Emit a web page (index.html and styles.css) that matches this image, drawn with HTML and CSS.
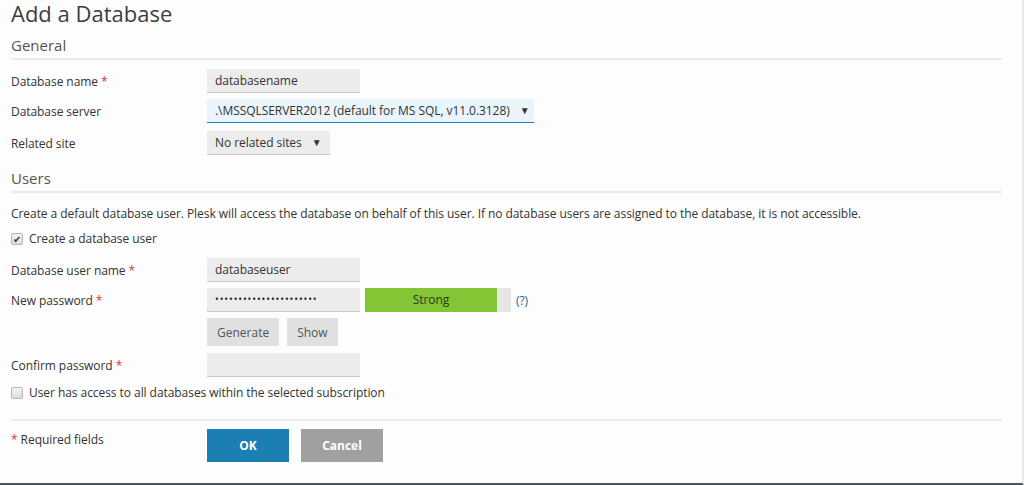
FILE: index.html
```html
<!DOCTYPE html>
<html>

<head>
  <title>Add a Database</title>
  <meta name="viewport" content="width=device-width, initial-scale=1">
  <link rel="stylesheet" href="styles.css">
</head>

<body>
  <div class="page">
    <h1>Add a Database</h1>

    <!-- General -->
    <div class="section">
      <h2>General</h2>
      <div class="row">
        <label>Database name <span class="req">*</span></label>
        <div class="field"><div class="input">databasename</div></div>
      </div>
      <div class="row">
        <label>Database server</label>
        <div class="field"><div class="select active">.\MSSQLSERVER2012 (default for MS SQL, v11.0.3128) <span class="arrow">&#9660;</span></div></div>
      </div>
      <div class="row last">
        <label>Related site</label>
        <div class="field"><div class="select">No related sites <span class="arrow">&#9660;</span></div></div>
      </div>
    </div>

    <!-- Users -->
    <div class="section users">
      <h2>Users</h2>
      <p class="hint">Create a default database user. Plesk will access the database on behalf of this user. If no database users are assigned to the database, it is not accessible.</p>
      <div class="check"><span class="box checked">&#10004;</span>Create a database user</div>
      <div class="row">
        <label>Database user name <span class="req">*</span></label>
        <div class="field"><div class="input">databaseuser</div></div>
      </div>
      <div class="row">
        <label>New password <span class="req">*</span></label>
        <div class="field">
          <div class="input dots">&bull;&bull;&bull;&bull;&bull;&bull;&bull;&bull;&bull;&bull;&bull;&bull;&bull;&bull;&bull;&bull;&bull;&bull;&bull;&bull;&bull;&bull;</div>
          <div class="strength"><div class="strength-fill">Strong</div></div>
          <span class="help">(?)</span>
        </div>
      </div>
      <div class="row buttons-row">
        <label></label>
        <div class="field">
          <button class="btn">Generate</button>
          <button class="btn">Show</button>
        </div>
      </div>
      <div class="row">
        <label>Confirm password <span class="req">*</span></label>
        <div class="field"><div class="input"></div></div>
      </div>
      <div class="check"><span class="box"></span>User has access to all databases within the selected subscription</div>
    </div>

    <!-- footer -->
    <div class="footer">
      <div class="required"><span class="req">*</span> Required fields</div>
      <div class="actions">
        <button class="btn-ok">OK</button>
        <button class="btn-cancel">Cancel</button>
      </div>
    </div>
  </div>
</body>

</html>
```

FILE: styles.css
```css
html,
body {
  margin: 0;
  height: 100%;
}

body {
  font-family: "Open Sans", Arial, sans-serif;
  font-size: 12px;
  letter-spacing: -0.06px;
  color: #333;
  background: #fdfdfd;
}

.page {
  box-sizing: border-box;
  height: 485px;
  padding: 0 20px 0 11px;
  border-right: 2px solid #e8e8e8;
  border-bottom: 2px solid #4c5661;
}

h1 {
  margin: 0;
  font-size: 22px;
  font-weight: normal;
  line-height: 26px;
  letter-spacing: 0;
  color: #3d3d3d;
}

h2 {
  margin: 0;
  font-size: 15px;
  font-weight: normal;
  line-height: 20px;
  letter-spacing: 0;
  color: #555;
  padding-bottom: 3px;
  border-bottom: 2px solid #ebebeb;
}

.section {
  margin-top: 9px;
}

.users {
  margin-top: 13px;
}

.row {
  display: grid;
  grid-template-columns: 196px auto;
  align-items: center;
  margin-top: 6px;
}

.row.last {
  margin-top: 8px;
}

.section h2 + .row {
  margin-top: 9px;
}

.row label {
  color: #333;
}

.req {
  color: #e0343d;
}

.field {
  display: flex;
  align-items: center;
}

.input {
  box-sizing: border-box;
  width: 153px;
  height: 24px;
  line-height: 23px;
  padding: 0 8px;
  background: #ececec;
  border-bottom: 1px solid #c8c8c8;
  color: #333;
  font-size: 12px;
}

.dots {
  font-size: 10px;
  letter-spacing: 0.9px;
  color: #222;
}

.select {
  box-sizing: border-box;
  height: 24px;
  line-height: 23px;
  padding: 0 8px;
  background: #ececec;
  border-bottom: 1px solid #c8c8c8;
  font-size: 12px;
}

.select.active {
  background: #eaf4fb;
  border-bottom: 1px solid #1d85c0;
  padding-right: 4px;
}

.arrow {
  font-size: 10px;
  margin-left: 7px;
  vertical-align: 1px;
}

.hint {
  margin: 13px 0 0;
  line-height: 16px;
}

.check {
  display: flex;
  align-items: center;
  margin-top: 9px;
  line-height: 16px;
}

.box {
  box-sizing: border-box;
  width: 12px;
  height: 12px;
  margin-right: 6px;
  border: 1px solid #b5b5b5;
  border-radius: 2px;
  background: linear-gradient(#f2f2f2, #dedede);
  font-size: 10px;
  line-height: 10px;
  text-align: center;
  color: #3a3a3a;
}

.users .check + .row {
  margin-top: 11px;
}

.strength {
  display: flex;
  width: 146px;
  height: 24px;
  margin-left: 5px;
  background: #e6e6e6;
}

.strength-fill {
  width: 132px;
  background: #84c535;
  text-align: center;
  line-height: 24px;
  color: #2b3a16;
}

.help {
  margin-left: 5px;
  color: #1f5d9c;
  font-size: 12px;
}

.btn {
  height: 28px;
  margin-right: 8px;
  padding: 0 10px;
  border: none;
  background: #e0e0e0;
  color: #555;
  font-family: inherit;
  font-size: 12px;
}

.buttons-row {
  margin-top: 6px;
}

.buttons-row + .row {
  margin-top: 7px;
}

.users .row + .check {
  margin-top: 8px;
}

.footer {
  display: grid;
  grid-template-columns: 196px auto;
  margin-top: 18px;
  padding-top: 8px;
  border-top: 2px solid #ebebeb;
}

.required {
  margin-top: 2px;
}

.actions {
  display: flex;
}

.btn-ok,
.btn-cancel {
  width: 82px;
  height: 33px;
  border: none;
  color: #fff;
  font-family: inherit;
  font-size: 12px;
  font-weight: bold;
}

.btn-ok {
  background: #1b7fb3;
}

.btn-cancel {
  margin-left: 12px;
  background: #a0a0a0;
}
```
